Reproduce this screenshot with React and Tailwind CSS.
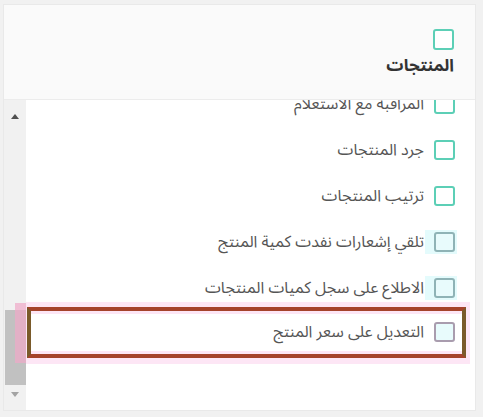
import React from 'react'

const font = { fontFamily: '"Noto Sans Arabic", "DejaVu Sans", "Noto Sans", sans-serif' }

const rows = [
  { label: 'المراقبة مع الاستعلام', mode: 'plain' },
  { label: 'جرد المنتجات', mode: 'plain' },
  { label: 'ترتيب المنتجات', mode: 'plain' },
  { label: 'تلقي إشعارات نفدت كمية المنتج', mode: 'hover' },
  { label: 'الاطلاع على سجل كميات المنتجات', mode: 'hover' },
]

function Box({ mode }) {
  if (mode === 'hover') {
    return (
      <div className="relative w-[21px] h-[20px]">
        <div className="absolute -top-[2px] -bottom-[2px] -right-[2px] -left-[9px] bg-[#e4fbfc]" />
        <div className="relative w-[21px] h-[20px] rounded-[3px] border-2 border-[#8fb3b6] bg-[#e8fbfc]" />
      </div>
    )
  }
  return <div className="w-[21px] h-[20px] rounded-[3px] border-2 border-[#5ccfb6] bg-white" />
}

function Row({ label, mode }) {
  return (
    <div className="h-[46px] flex items-center pr-[20px] gap-[10px]">
      <Box mode={mode} />
      <span className="text-[16px] leading-[20px] text-[#555]">{label}</span>
    </div>
  )
}

export default function App() {
  return (
    <div className="w-[483px] h-[417px] bg-[#f1f1f1] pt-[4px] pl-[3px]" style={font}>
      <div dir="rtl" className="w-[473px] h-[407px] bg-[#fafafa] border border-[#e9e9e9] flex flex-col">
        <div className="h-[95px] shrink-0 border-b border-[#ececec] pr-[21px] pt-[24px] flex flex-col items-start">
          <div className="w-[21px] h-[21px] rounded-[3px] border-2 border-[#5ccfb6] bg-white" />
          <div className="mt-[4px] text-[17px] font-bold text-[#333]">المنتجات</div>
        </div>
        <div className="flex-1 flex min-h-0">
          <div className="flex-1 bg-white overflow-hidden">
            <div className="-mt-[19px]">
              {rows.map(r => <Row key={r.label} {...r} />)}
              <div className="relative h-[42px]">
                <div className="absolute -top-[9px] -bottom-[11px] right-[5px] -left-[12px] bg-[#fde6f5]" />
                <div className="absolute -top-[4px] -bottom-[5px] right-[9px] left-[1px] border-x-4 border-x-[#7a5a2a] border-y-4 border-y-[#a5432b] bg-[#fde6f5]">
                  <div className="absolute top-[3px] bottom-[3px] left-0 right-0 bg-white" />
                </div>
                <div className="relative h-full flex items-center pr-[20px] gap-[10px]">
                  <div className="relative w-[21px] h-[20px] rounded-[3px] border-2 border-[#a99cae] bg-[#e8fbfc]" />
                  <span className="text-[16px] leading-[20px] text-[#555]">التعديل على سعر المنتج</span>
                </div>
              </div>
            </div>
          </div>
          <div className="w-[22px] shrink-0 bg-[#f1f1f1] flex flex-col items-center relative">
            <div className="h-[16px] mt-[8px] flex items-center justify-center">
              <div className="w-0 h-0 border-x-[4px] border-x-transparent border-b-[5px] border-b-[#505050]" />
            </div>
            <div className="flex-1" />
            <div className="w-[21px] h-[75px] bg-[#c1c1c1] ml-[1px] relative">
              <div className="absolute top-[-7px] h-[60px] right-0 w-[11px] bg-[#f0a8c8] opacity-70" />
            </div>
            <div className="h-[16px] mt-[1px] mb-[8px] flex items-center justify-center">
              <div className="w-0 h-0 border-x-[4px] border-x-transparent border-t-[5px] border-t-[#a3a3a3]" />
            </div>
          </div>
        </div>
      </div>
    </div>
  )
}
